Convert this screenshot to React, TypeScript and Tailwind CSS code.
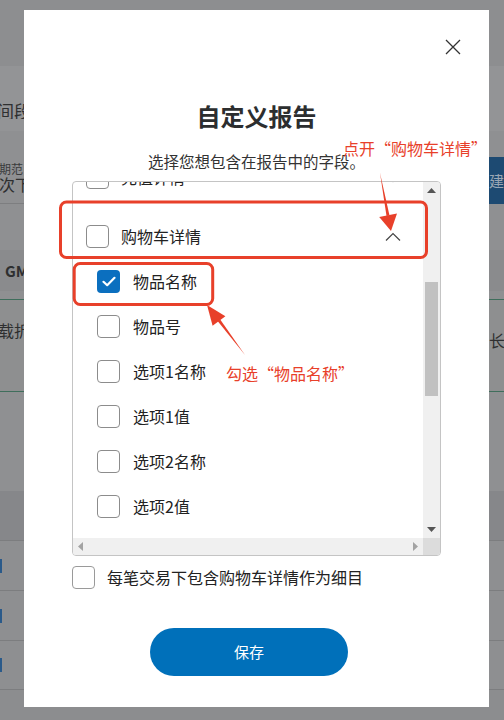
import React from "react";

const Box = ({ checked = false, light = false }: { checked?: boolean; light?: boolean }) =>
  checked ? (
    <div className="w-[23px] h-[23px] rounded-[4px] bg-[#0b6fbf] flex items-center justify-center shrink-0">
      <svg width="14" height="11" viewBox="0 0 14 11" fill="none">
        <path d="M1.5 5.8 L5.2 9.2 L12.5 1.8" stroke="#fff" strokeWidth="2.2" strokeLinecap="round" strokeLinejoin="round" />
      </svg>
    </div>
  ) : (
    <div
      className={`w-[23px] h-[23px] rounded-[4px] border bg-white shrink-0 ${light ? "border-[#9a9a9a]" : "border-[#8c8c8c]"}`}
    />
  );

const ChevronUp = () => (
  <svg width="16" height="10" viewBox="0 0 16 10" fill="none">
    <path d="M1 8.5 L8 1.5 L15 8.5" stroke="#444" strokeWidth="1.2" />
  </svg>
);
const ChevronDown = () => (
  <svg width="16" height="10" viewBox="0 0 16 10" fill="none">
    <path d="M1 1.5 L8 8.5 L15 1.5" stroke="#444" strokeWidth="1.2" />
  </svg>
);

const subItems = ["物品名称", "物品号", "选项1名称", "选项1值", "选项2名称", "选项2值"];

export default function App() {
  return (
    <div className="relative w-[504px] h-[720px] overflow-hidden font-['Noto_Sans_CJK_SC','Noto_Sans',sans-serif]">
      {/* background page under overlay */}
      <div className="flex flex-col h-[720px] bg-[#8c8d8f] text-[#2e2f30]">
        <div className="h-[66px] bg-[#8d8e90]" />
        <div className="h-[65px] bg-[#939496] flex items-start">
          <div className="w-[24px] overflow-hidden whitespace-nowrap mt-[36px]">
            <span className="block -ml-[3px] text-[17px] leading-none">间段</span>
          </div>
        </div>
        <div className="h-[73px] bg-[#8f9092] border-b border-[#7d7e80] flex justify-between">
          <div className="w-[24px] overflow-hidden whitespace-nowrap flex flex-col pt-[30px]">
            <span className="-ml-[1px] text-[12px] leading-[15px] text-[#3a3b3c]">期范</span>
            <span className="-ml-[1px] text-[16px] leading-[17px]">次下</span>
          </div>
          <div className="mt-[26px] h-[48px] w-[15px] bg-[#1d4a72] text-[#9aa6b4] text-[15px] leading-[48px] overflow-hidden whitespace-nowrap">
            建拍
          </div>
        </div>
        <div className="h-[46px] bg-[#8f9092]" />
        <div className="h-[41px] bg-[#8a8b8d] flex items-center">
          <div className="w-[24px] overflow-hidden whitespace-nowrap">
            <span className="block ml-[5px] text-[15px] font-bold leading-none">GM</span>
          </div>
        </div>
        <div className="h-[9px] bg-[#8f9092] border-b border-[#3f6e5c]" />
        <div className="h-[92px] bg-[#8e8f90] border-b border-[#3f6e5c] flex justify-between">
          <div className="w-[24px] overflow-hidden whitespace-nowrap mt-[22px]">
            <span className="block -ml-[2px] text-[16px] leading-none">载折</span>
          </div>
          <div className="w-[15px] overflow-hidden whitespace-nowrap mt-[32px]">
            <span className="block text-[16px] leading-none">长的</span>
          </div>
        </div>
        <div className="h-[99px] bg-[#8f9092]" />
        <div className="h-[50px] bg-[#86878a] border-b border-[#7c7d7f]" />
        <div className="h-[50px] bg-[#8e8f91] border-b border-[#7c7d7f] flex items-center">
          <div className="w-[2px] h-[14px] bg-[#2a5a8a]" />
        </div>
        <div className="h-[50px] bg-[#8e8f91] border-b border-[#7c7d7f] flex items-center">
          <div className="w-[2px] h-[14px] bg-[#2a5a8a]" />
        </div>
        <div className="h-[49px] bg-[#8e8f91] border-b border-[#7c7d7f] flex items-center">
          <div className="w-[2px] h-[14px] bg-[#2a5a8a]" />
        </div>
        <div className="flex-1 bg-[#8c8d8f]" />
      </div>

      {/* modal */}
      <div className="absolute left-[24px] top-[10px] w-[465px] h-[697px] bg-white flex flex-col px-[48px] pt-[90px]">
        <button className="absolute left-[421px] top-[29px] w-[16px] h-[16px]">
          <svg width="16" height="16" viewBox="0 0 16 16" fill="none">
            <path d="M1 1 L15 15 M15 1 L1 15" stroke="#333" strokeWidth="1.3" />
          </svg>
        </button>
        <h1 className="text-center text-[24px] leading-[32px] font-bold text-[#2c2e2f]">自定义报告</h1>
        <p className="mt-[17px] text-center text-[15.5px] leading-[24px] text-[#333]">选择您想包含在报告中的字段。</p>

        <div className="mt-[8px] w-[369px] h-[375px] border border-[#c4c4c4] rounded-[4px] overflow-hidden grid grid-cols-[1fr_17px] grid-rows-[1fr_17px]">
          <div className="overflow-hidden">
            <div className="-mt-[27px] flex flex-col text-[16px] text-[#222]">
              <div className="h-[45px] flex items-center pl-[13px]">
                <Box />
                <span className="ml-[12px] leading-none -translate-y-[1px]">充值详情</span>
                <span className="ml-auto mr-[22px] flex"><ChevronDown /></span>
              </div>
              <div className="h-[14px]" />
              <div className="h-[45px] flex items-center pl-[13px]">
                <Box />
                <span className="ml-[12px] leading-none -translate-y-[1px]">购物车详情</span>
                <span className="ml-auto mr-[22px] flex"><ChevronUp /></span>
              </div>
              {subItems.map((t, i) => (
                <div key={t} className="h-[45px] flex items-center pl-[24px]">
                  <Box checked={i === 0} />
                  <span className="ml-[13px] leading-none -translate-y-[1px]">{t}</span>
                </div>
              ))}
            </div>
          </div>
          <div className="bg-[#f0f0f0] flex flex-col items-center">
            <svg width="9" height="5" viewBox="0 0 9 5" className="mt-[6px]">
              <path d="M0 5 L4.5 0 L9 5 Z" fill="#555" />
            </svg>
            <div className="mt-[89px] w-[13px] h-[114px] bg-[#c1c1c1]" />
            <div className="flex-1" />
            <svg width="9" height="5" viewBox="0 0 9 5" className="mb-[6px]">
              <path d="M0 0 L4.5 5 L9 0 Z" fill="#555" />
            </svg>
          </div>
          <div className="bg-[#f0f0f0] flex items-center justify-between px-[5px]">
            <svg width="5" height="9" viewBox="0 0 5 9">
              <path d="M5 0 L0 4.5 L5 9 Z" fill="#a3a3a3" />
            </svg>
            <svg width="5" height="9" viewBox="0 0 5 9">
              <path d="M0 0 L5 4.5 L0 9 Z" fill="#a3a3a3" />
            </svg>
          </div>
          <div className="bg-[#dcdcdc]" />
        </div>

        <div className="mt-[10px] flex items-center">
          <Box light />
          <span className="ml-[12px] text-[16px] leading-none text-[#222] -translate-y-[1px]">每笔交易下包含购物车详情作为细目</span>
        </div>

        <button className="mt-[39px] ml-[78px] w-[198px] h-[48px] rounded-full bg-[#0070ba] text-white text-[15px] flex items-center justify-center">
          保存
        </button>
      </div>

      {/* annotations */}
      <svg className="absolute inset-0 pointer-events-none" width="504" height="720" viewBox="0 0 504 720" fill="none">
        <rect x="60.5" y="202" width="366" height="55.5" rx="6" stroke="#e8402a" strokeWidth="3" />
        <rect x="74.2" y="263.5" width="138.5" height="41" rx="6" stroke="#e8402a" strokeWidth="3" />
        <path d="M380 173 L389.5 215.5 L386.5 216 Z" fill="#e8402a" />
        <path d="M391 231 L397 213.6 L379.2 217 Z" fill="#e8402a" />
        <path d="M245 355 L220.2 319.5 L217.8 321.3 Z" fill="#e8402a" />
        <path d="M207 305 L225.4 316.2 L212.6 325.8 Z" fill="#e8402a" />
      </svg>
      <div className="absolute left-[343px] top-[138px] text-[16px] leading-[20px] text-[#e8402a] whitespace-nowrap">
        点开“购物车详情”
      </div>
      <div className="absolute left-[226px] top-[363px] text-[16px] leading-[20px] text-[#e8402a] whitespace-nowrap">
        勾选“物品名称”
      </div>
    </div>
  );
}
